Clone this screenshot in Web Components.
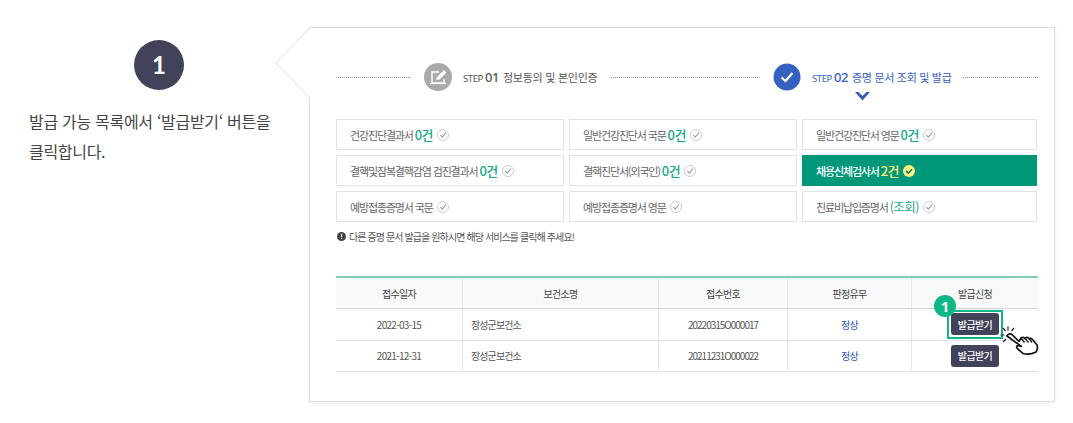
<!DOCTYPE html>
<html lang="ko">
<head>
<meta charset="utf-8">
<style>
  html, body { margin: 0; background: #fff; }
  body { font-family: "Noto Sans CJK KR", "Noto Sans", sans-serif; }
</style>
</head>
<body>
<guide-page>
  <guide-aside slot="aside" num="1">발급 가능 목록에서 ‘발급받기‘ 버튼을<br>클릭합니다.</guide-aside>
  <guide-panel slot="panel">
    <step-bar slot="steps"></step-bar>
    <doc-grid slot="docs">
      <doc-item>건강진단결과서 <b>0건</b></doc-item>
      <doc-item>일반건강진단서 국문 <b>0건</b></doc-item>
      <doc-item>일반건강진단서 영문 <b>0건</b></doc-item>
      <doc-item>결핵및잠복결핵감염 검진결과서 <b>0건</b></doc-item>
      <doc-item>결핵진단서(외국인) <b>0건</b></doc-item>
      <doc-item active>채용신체검사서 <b>2건</b></doc-item>
      <doc-item>예방접종증명서 국문</doc-item>
      <doc-item>예방접종증명서 영문</doc-item>
      <doc-item>진료비납입증명서 <b class="n">(조회)</b></doc-item>
    </doc-grid>
    <p-note slot="note">다른 증명 문서 발급을 원하시면 해당 서비스를 클릭해 주세요!</p-note>
    <result-table slot="table"></result-table>
  </guide-panel>
</guide-page>

<script>
class GuidePage extends HTMLElement {
  constructor() {
    super()
    this.attachShadow({ mode: "open" })
    this.shadowRoot.innerHTML = `
      <style>
        :host { display: flex; width: 1073px; height: 423px; box-sizing: border-box; padding: 27px 18px 0 0; overflow: hidden; }
        .left { width: 309px; flex: none; }
      </style>
      <div class="left"><slot name="aside"></slot></div>
      <slot name="panel"></slot>
    `
  }
}

class GuideAside extends HTMLElement {
  constructor() {
    super()
    this.attachShadow({ mode: "open" })
    this.shadowRoot.innerHTML = `
      <style>
        :host { display: block; padding: 13px 0 0 29px; }
        .num {
          width: 50px; height: 50px; border-radius: 50%; margin-left: 105px;
          background: #42435a; color: #fff; font: 700 24px/50px Lato, sans-serif; text-align: center;
        }
        p { margin: 16px 0 0; font-size: 16px; line-height: 30px; letter-spacing: -0.3px; color: #444; white-space: nowrap; }
      </style>
      <div class="num">${this.getAttribute("num")}</div>
      <p><slot></slot></p>
    `
  }
}

class GuidePanel extends HTMLElement {
  constructor() {
    super()
    this.attachShadow({ mode: "open" })
    this.shadowRoot.innerHTML = `
      <style>
        :host { display: block; position: relative; width: 746px; height: 375px; box-sizing: border-box; border: 1px solid #ddd; box-shadow: 0 1px 4px rgba(0,0,0,.08); padding: 0 17px 0 26px; background: #fff; }
        .tip { position: absolute; left: -35px; top: -1px; width: 36px; height: 72px; }
        .steps { height: 91px; }
        .note { margin-top: 6px; }
        .table { margin-top: 32px; }
      </style>
      <svg class="tip" viewBox="0 0 36 72"><path d="M35 .5 1 36l34 35" fill="#fff" stroke="#ddd"/><path d="M35.500 1v70" stroke="#fff" stroke-width="2"/></svg>
      <div class="steps"><slot name="steps"></slot></div>
      <slot name="docs"></slot>
      <div class="note"><slot name="note"></slot></div>
      <div class="table"><slot name="table"></slot></div>
    `
  }
}

class StepBar extends HTMLElement {
  constructor() {
    super()
    this.attachShadow({ mode: "open" })
    this.shadowRoot.innerHTML = `
      <style>
        :host { display: block; width: 702px; height: 91px; color: #555; position: relative; }
        .wrap { display: flex; align-items: center; width: 100%; height: 28px; padding-top: 35px; }
        .line { flex: none; height: 0; border-top: 1px dotted #999; }
        .ico { flex: none; width: 28px; height: 28px; }
        .st { flex: none; width: 40px; margin-left: 11px; font: 9.500px "Noto Sans", sans-serif; letter-spacing: -.4px; white-space: nowrap; }
        .st b { font-size: 13px; font-weight: 500; letter-spacing: -.5px; }
        .t { flex: none; font-size: 11px; margin-left: 0; white-space: nowrap; }
        .blue { color: #3460c2; }
        .down { position: absolute; left: 519px; top: 64px; width: 15px; height: 9px; }
      </style>
      <div class="wrap">
        <i class="line" style="width:75px;margin-right:13px"></i>
        <svg class="ico" viewBox="0 0 28 28">
          <circle cx="14" cy="14" r="14" fill="#aaa"/>
          <path d="M15 9H8v11h12v-4" fill="none" stroke="#fff" stroke-width="1.400"/>
          <path d="m12 17 1-3 7-7 2.500 2.500-7 7z" fill="#fff"/>
          <path d="M6 20.500h16" stroke="#fff" stroke-width="1.200"/>
        </svg>
        <span class="st">STEP <b>01</b></span><span class="t" style="width:95px;letter-spacing:-.26px">정보동의 및 본인인증</span>
        <i class="line" style="width:149px;margin:0 13px"></i>
        <svg class="ico" viewBox="0 0 28 28">
          <circle cx="14" cy="14" r="13.500" fill="#3460c2"/>
          <path d="m8.500 14.500 4 3.500 7-8" fill="none" stroke="#fff" stroke-width="2.200"/>
        </svg>
        <span class="st blue">STEP <b>02</b></span><span class="t blue" style="width:99px;letter-spacing:-.3px">증명 문서 조회 및 발급</span>
        <i class="line" style="width:75px;margin-left:12px"></i>
      </div>
      <svg class="down" viewBox="0 0 15 9"><path d="M0 0h3.500l4 4 4-4H15L7.500 8.500z" fill="#2f5cbc"/></svg>
    `
  }
}

class DocGrid extends HTMLElement {
  constructor() {
    super()
    this.attachShadow({ mode: "open" })
    this.shadowRoot.innerHTML = `
      <style>
        :host { display: grid; width: 701px; grid-template-columns: 228px 228px 235px; grid-auto-rows: 31px; gap: 5px; }
      </style>
      <slot></slot>
    `
  }
}

class DocItem extends HTMLElement {
  constructor() {
    super()
    this.attachShadow({ mode: "open" })
    const active = this.hasAttribute("active")
    this.shadowRoot.innerHTML = `
      <style>
        :host { display: flex; align-items: center; gap: 4px; box-sizing: border-box; padding-left: 13px; border: 1px solid #e2e2e2; font-size: 11px; letter-spacing: -1.150px; color: #666; white-space: nowrap; }
        :host([active]) { background: #009878; border-color: #009878; color: #fff; font-weight: 500; }
        svg { width: 12px; height: 12px; flex: none; }
        ::slotted(b) { font-size: 13px; font-weight: 500; letter-spacing: -.6px; color: #17a78a; }
        ::slotted(b.n) { font-size: 12.500px; font-weight: 400; }
      </style>
      <span><slot></slot></span>
      ${active
        ? `<svg viewBox="0 0 12 12"><circle cx="6" cy="6" r="6" fill="#fdf27d"/><path d="m3 6 2.300 2.200L9 4.200" fill="none" stroke="#00785f" stroke-width="1.600"/></svg>`
        : `<svg viewBox="0 0 12 12"><circle cx="6" cy="6" r="5.500" fill="#fff" stroke="#ccc"/><path d="m3.300 6 2 2.200L9 3.500" fill="none" stroke="#999" stroke-width="1.100"/></svg>`}
    `
    if (active) this.querySelector("b").style.color = "#fdf27d"
  }
}

class PNote extends HTMLElement {
  constructor() {
    super()
    this.attachShadow({ mode: "open" })
    this.shadowRoot.innerHTML = `
      <style>
        :host { display: flex; align-items: center; gap: 3px; height: 16px; margin-left: 1px; font-size: 10px; letter-spacing: -.9px; color: #555; }
        svg { width: 9px; height: 9px; flex: none; }
      </style>
      <svg viewBox="0 0 9 9"><circle cx="4.500" cy="4.500" r="4.500" fill="#444"/><path d="M4 1.800h1.100v3.400H4zM4 6h1.100v1.100H4z" fill="#fff"/></svg>
      <span><slot></slot></span>
    `
  }
}

const rows = [
  ["2022-03-15", "장성군보건소", "20220315O000017", "정상"],
  ["2021-12-31", "장성군보건소", "20211231O000022", "정상"],
]

class ResultTable extends HTMLElement {
  constructor() {
    super()
    this.attachShadow({ mode: "open" })
    this.shadowRoot.innerHTML = `
      <style>
        :host { display: block; width: 702px; position: relative; font-size: 10px; color: #555; letter-spacing: -.7px; }
        .grid { display: grid; grid-template-columns: 127px 196px 129px 124px 126px; border-top: 2px solid #7fd0b8; }
        .grid > div { display: flex; align-items: center; justify-content: center; height: 30.500px; border-bottom: 1px solid #e2e2e2; border-right: 1px solid #e6e6e6; }
        .grid > div:nth-child(5n) { border-right: 0; }
        .grid > .h { background: #f8f9f9; height: 30px; border-bottom: 1px solid #d5d5d5; color: #444; }
        .grid > .name { justify-content: flex-start; padding-left: 8px; letter-spacing: -.9px; }
        .num { letter-spacing: -1px; }
        .ok { color: #2f5cbc; }
        .btn { width: 48px; height: 22px; border-radius: 3px; background: #42435a; color: #fff; border: 0; padding: 0; font: 500 10px "Noto Sans CJK KR", sans-serif; letter-spacing: -.6px; }
        .focus { position: absolute; left: 611px; top: 34px; width: 52px; height: 25px; border: 2px solid #0db886; pointer-events: none; }
        .badge { position: absolute; left: 598px; top: 19px; width: 22px; height: 22px; border-radius: 50%; background: #0db886; color: #fff; font: 700 15px/22px "Noto Sans", sans-serif; letter-spacing: 0; text-align: center; }
        .hand { position: absolute; left: 664px; top: 49px; width: 40px; height: 32px; }
      </style>
      <div class="grid">
        <div class="h">접수일자</div><div class="h">보건소명</div><div class="h">접수번호</div><div class="h">판정유무</div><div class="h">발급신청</div>
        ${rows.map(r => `
          <div>${r[0]}</div><div class="name">${r[1]}</div><div class="num">${r[2]}</div><div class="ok">${r[3]}</div>
          <div><button class="btn">발급받기</button></div>`).join("")}
      </div>
      <div class="focus"></div>
      <div class="badge">1</div>
      <svg class="hand" viewBox="0 0 40 32">
        <path d="M8 1.500v4M14 3l-2.500 3M3 3l2.500 3M.5 10h4M3 17l3-3" stroke="#222" stroke-width="1.200" fill="none"/>
        <path d="M7 11c1-2 3-3 5-1.500l7 7 2-3.500c1.500-1 3-.5 4 .5 1-1.500 3-1.500 4 0 1.500-.5 2.500 0 3.500 1l4.500 5.500c1 3 .5 5-1 7-4 2-9 2.500-13 1.500-2-2-4-3-6-5.500-1-1.500 0-2.500 1.500-2.500l3 1z" fill="#fff" stroke="#111" stroke-width="1.700" stroke-linejoin="round"/>
        <path d="m21 13 3.500 4.500M25 13.500l3.500 4M29 13.500l3 4" fill="none" stroke="#111" stroke-width="1.300"/>
      </svg>
    `
  }
}

customElements.define("guide-page", GuidePage)
customElements.define("guide-aside", GuideAside)
customElements.define("guide-panel", GuidePanel)
customElements.define("step-bar", StepBar)
customElements.define("doc-grid", DocGrid)
customElements.define("doc-item", DocItem)
customElements.define("p-note", PNote)
customElements.define("result-table", ResultTable)
</script>
</body>
</html>
